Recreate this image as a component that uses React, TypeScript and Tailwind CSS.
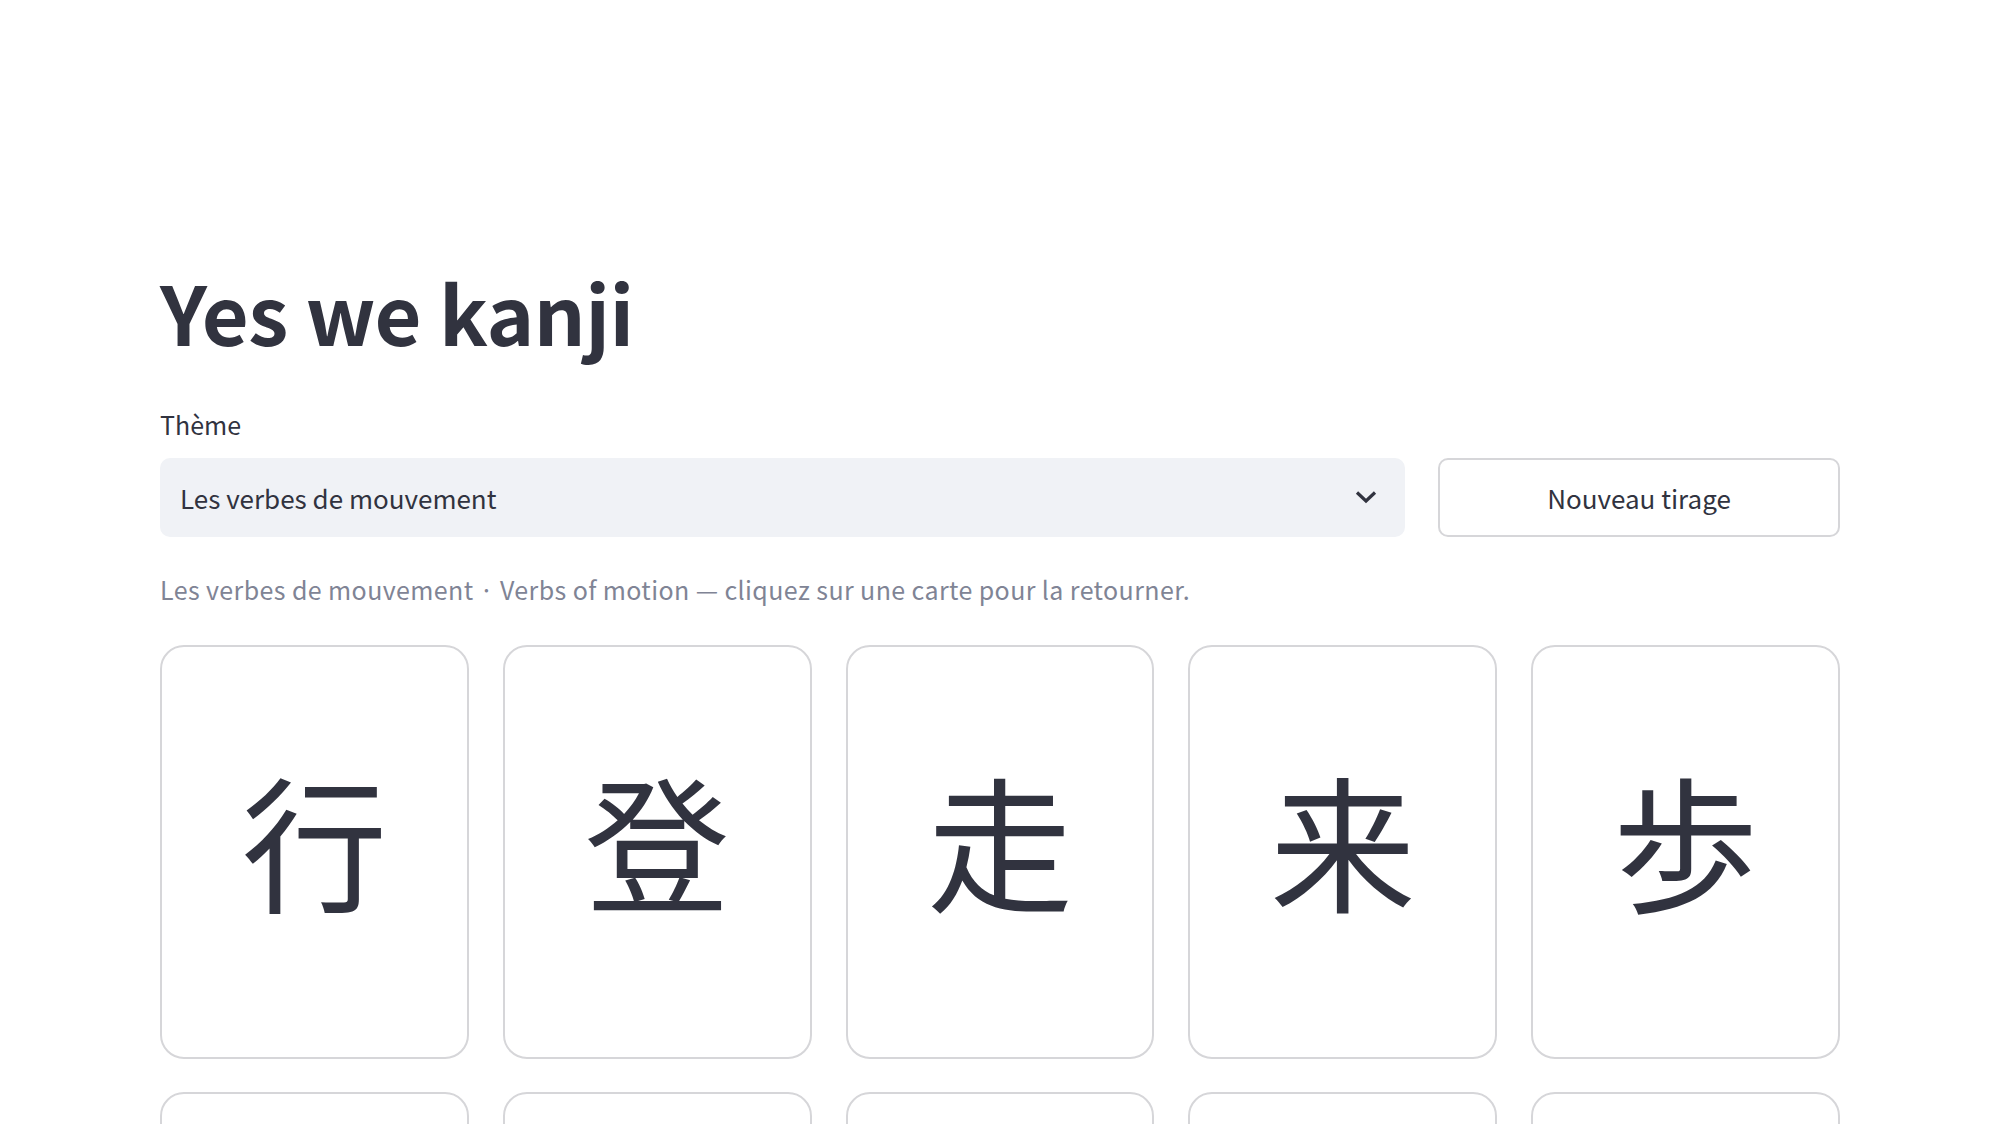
import { useState } from "react";

const font = { fontFamily: '"Noto Sans CJK JP", "Noto Sans", sans-serif' };

const kanji = ["行", "登", "走", "来", "歩", "帰", "入", "出", "飛", "泳"];

function Chevron() {
  return (
    <svg width="22" height="14" viewBox="0 0 22 14" fill="none" aria-hidden>
      <path d="M2 2.5L11 11L20 2.5" stroke="#31333f" strokeWidth="3.2" />
    </svg>
  );
}

function Card({ char }: { char: string }) {
  const [flipped, setFlipped] = useState(false);
  return (
    <button
      onClick={() => setFlipped(!flipped)}
      className="flex h-[414px] items-center justify-center rounded-[24px] border-2 border-[#d6d6d9] bg-white text-[146px] leading-none text-[#31333f]"
    >
      <span className="-mt-[28px]">{flipped ? "" : char}</span>
    </button>
  );
}

export default function App() {
  return (
    <div className="h-[1124px] overflow-hidden bg-white text-[#31333f]" style={font}>
      <div className="px-[160px] pt-[262px]">
        <h1 className="text-[81px] font-bold leading-[1.2] tracking-[-0.5px]">Yes we kanji</h1>

        <p className="mt-[49px] text-[25px] leading-[1.3]">Thème</p>

        <div className="mt-[17px] flex gap-[33px]">
          <div className="flex h-[79px] flex-1 items-center justify-between rounded-[10px] bg-[#f0f2f6] pl-[20px] pr-[28px] text-[26px]">
            <span>Les verbes de mouvement</span>
            <Chevron />
          </div>
          <button className="h-[79px] w-[402px] rounded-[10px] border-2 border-[#d6d6d9] bg-white text-[26px]">
            Nouveau tirage
          </button>
        </div>

        <p className="mt-[36px] text-[25px] leading-[1.3] tracking-[0.4px] text-[#808495]">
          Les verbes de mouvement · Verbs of motion — cliquez sur une carte pour la retourner.
        </p>

        <div className="mt-[40px] grid grid-cols-5 gap-x-[34px] gap-y-[33px]">
          {kanji.map((k) => (
            <Card key={k} char={k} />
          ))}
        </div>
      </div>
    </div>
  );
}
